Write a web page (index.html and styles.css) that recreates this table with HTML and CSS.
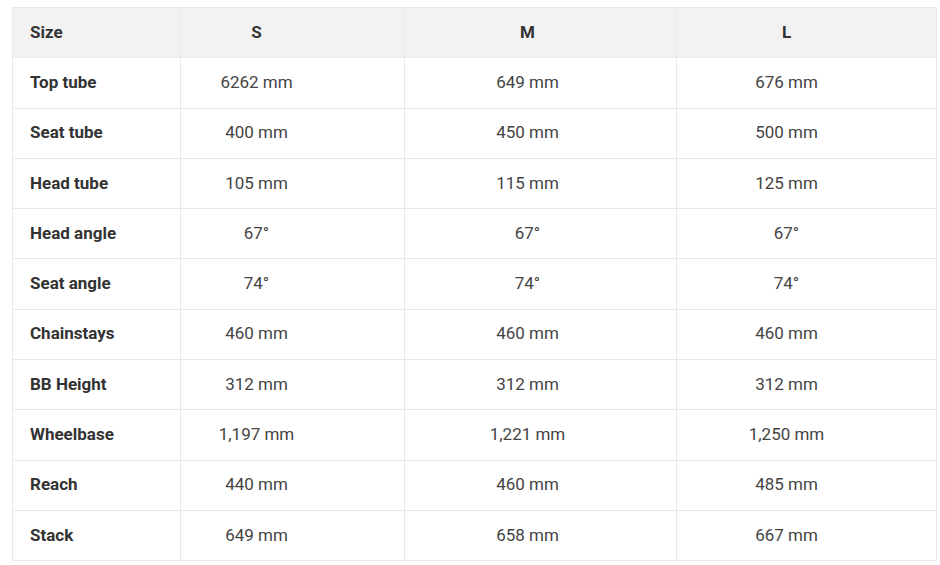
FILE: index.html
```html
<!DOCTYPE html>
<html>
<head>
<meta charset="utf-8">
<link rel="stylesheet" href="styles.css">
</head>
<body>
<table class="geo">
  <colgroup>
    <col class="c1"><col class="c2"><col class="c3"><col class="c4">
  </colgroup>
  <thead>
    <tr><th class="lbl">Size</th><th>S</th><th>M</th><th>L</th></tr>
  </thead>
  <tbody>
    <tr><td class="lbl">Top tube</td><td>6262 mm</td><td>649 mm</td><td>676 mm</td></tr>
    <tr><td class="lbl">Seat tube</td><td>400 mm</td><td>450 mm</td><td>500 mm</td></tr>
    <tr><td class="lbl">Head tube</td><td>105 mm</td><td>115 mm</td><td>125 mm</td></tr>
    <tr><td class="lbl">Head angle</td><td>67°</td><td>67°</td><td>67°</td></tr>
    <tr><td class="lbl">Seat angle</td><td>74°</td><td>74°</td><td>74°</td></tr>
    <tr><td class="lbl">Chainstays</td><td>460 mm</td><td>460 mm</td><td>460 mm</td></tr>
    <tr><td class="lbl">BB Height</td><td>312 mm</td><td>312 mm</td><td>312 mm</td></tr>
    <tr><td class="lbl">Wheelbase</td><td>1,197 mm</td><td>1,221 mm</td><td>1,250 mm</td></tr>
    <tr><td class="lbl">Reach</td><td>440 mm</td><td>460 mm</td><td>485 mm</td></tr>
    <tr><td class="lbl">Stack</td><td>649 mm</td><td>658 mm</td><td>667 mm</td></tr>
  </tbody>
</table>
</body>
</html>
```
FILE: styles.css
```css
html, body {
  margin: 0;
  padding: 0;
  background: #fff;
}
body {
  padding: 7px 0 0 12px;
  font-family: Roboto, "Liberation Sans", sans-serif;
}
.geo {
  border-collapse: collapse;
  table-layout: fixed;
  width: 924px;
  font-size: 17px;
}
.c1 { width: 168px; }
.c2 { width: 224px; }
.c3 { width: 272px; }
.c4 { width: 260px; }
.geo th, .geo td {
  border: 1px solid #e9e9e9;
  height: 50.3px;
  padding: 0 17px 2px;
  text-align: center;
  color: #444;
  font-weight: 400;
  box-sizing: border-box;
}
.geo th:nth-child(2), .geo td:nth-child(2) { padding: 0 72px 2px 0; }
.geo th:nth-child(3), .geo td:nth-child(3) { padding: 0 26px 2px 0; }
.geo th:nth-child(4), .geo td:nth-child(4) { padding: 0 40px 2px 0; }
.geo thead th {
  background: #f2f2f2;
  font-weight: 700;
  color: #333;
}
.geo .lbl {
  text-align: left;
  font-weight: 700;
  color: #333;
}
```
